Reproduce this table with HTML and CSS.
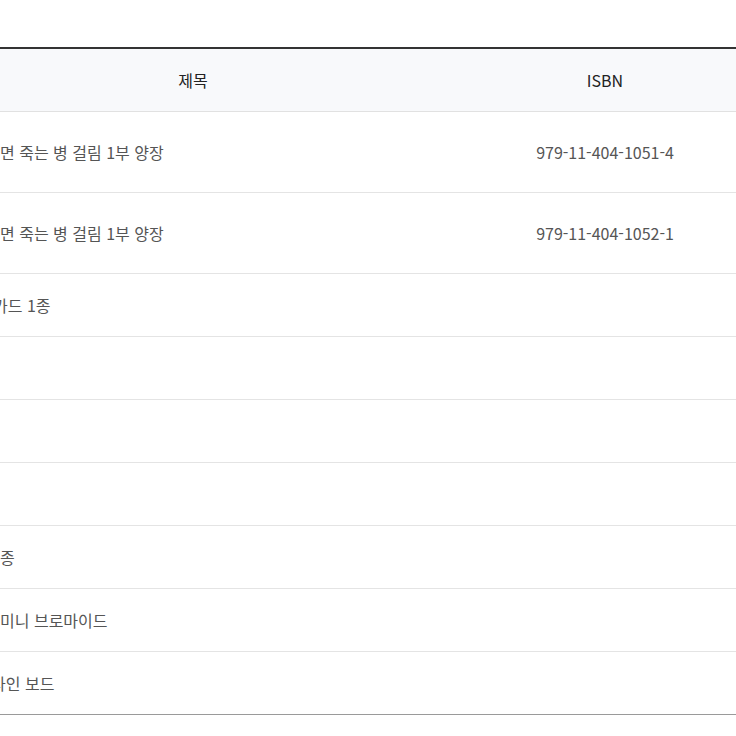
FILE: index.html
```html
<!DOCTYPE html>
<html lang="ko">
<head>
<meta charset="utf-8">
<title>도서 정보</title>
<link rel="stylesheet" href="styles.css">
</head>
<body>
<div class="frame">
  <table class="grid">
    <colgroup>
      <col class="c-title">
      <col class="c-isbn">
    </colgroup>
    <thead>
      <tr>
        <th>제목</th>
        <th>ISBN</th>
      </tr>
    </thead>
    <tbody>
      <tr class="tall">
        <td class="title">면 죽는 병 걸림 1부 양장</td>
        <td class="isbn">979-11-404-1051-4</td>
      </tr>
      <tr class="tall">
        <td class="title">면 죽는 병 걸림 1부 양장</td>
        <td class="isbn">979-11-404-1052-1</td>
      </tr>
      <tr>
        <td class="title"><span class="cut">카드 1종</span></td>
        <td class="isbn"></td>
      </tr>
      <tr>
        <td class="title"></td>
        <td class="isbn"></td>
      </tr>
      <tr>
        <td class="title"></td>
        <td class="isbn"></td>
      </tr>
      <tr>
        <td class="title"></td>
        <td class="isbn"></td>
      </tr>
      <tr>
        <td class="title">종</td>
        <td class="isbn"></td>
      </tr>
      <tr>
        <td class="title">미니 브로마이드</td>
        <td class="isbn"></td>
      </tr>
      <tr class="last">
        <td class="title"><span class="cut cut-wide">사인 보드</span></td>
        <td class="isbn"></td>
      </tr>
    </tbody>
  </table>
</div>
</body>
</html>
```
FILE: styles.css
```css
html, body {
  margin: 0;
  padding: 0;
  background: #ffffff;
}

body {
  font-family: "Noto Sans CJK KR", "Noto Sans", sans-serif;
  font-size: 16px;
  color: #555555;
}

.frame {
  width: 736px;
  height: 736px;
  overflow: hidden;
  padding-top: 47px;
  box-sizing: border-box;
}

.grid {
  border-collapse: collapse;
  table-layout: fixed;
  width: 824px;
  margin-left: -20px;
  border-top: 2px solid #333333;
  border-bottom: 1px solid #9a9a9a;
}

.c-title { width: 426px; }
.c-isbn { width: 398px; }

.grid th {
  height: 62px;
  padding: 0;
  background: #f8f9fb;
  font-weight: 400;
  color: #222222;
  text-align: center;
  border-bottom: 1px solid #e1e1e1;
  vertical-align: middle;
}

.grid td {
  height: 62px;
  padding: 0;
  border-bottom: 1px solid #e4e4e4;
  vertical-align: middle;
  white-space: nowrap;
}

.grid tr.tall td {
  height: 80px;
}

.grid tr.last td {
  border-bottom: 1px solid #9a9a9a;
}

.title {
  text-align: left;
  padding-left: 20px !important;
}

.isbn {
  text-align: center;
}

.cut {
  display: inline-block;
  margin-left: -7px;
}

.cut-wide {
  margin-left: -9px;
}
```
